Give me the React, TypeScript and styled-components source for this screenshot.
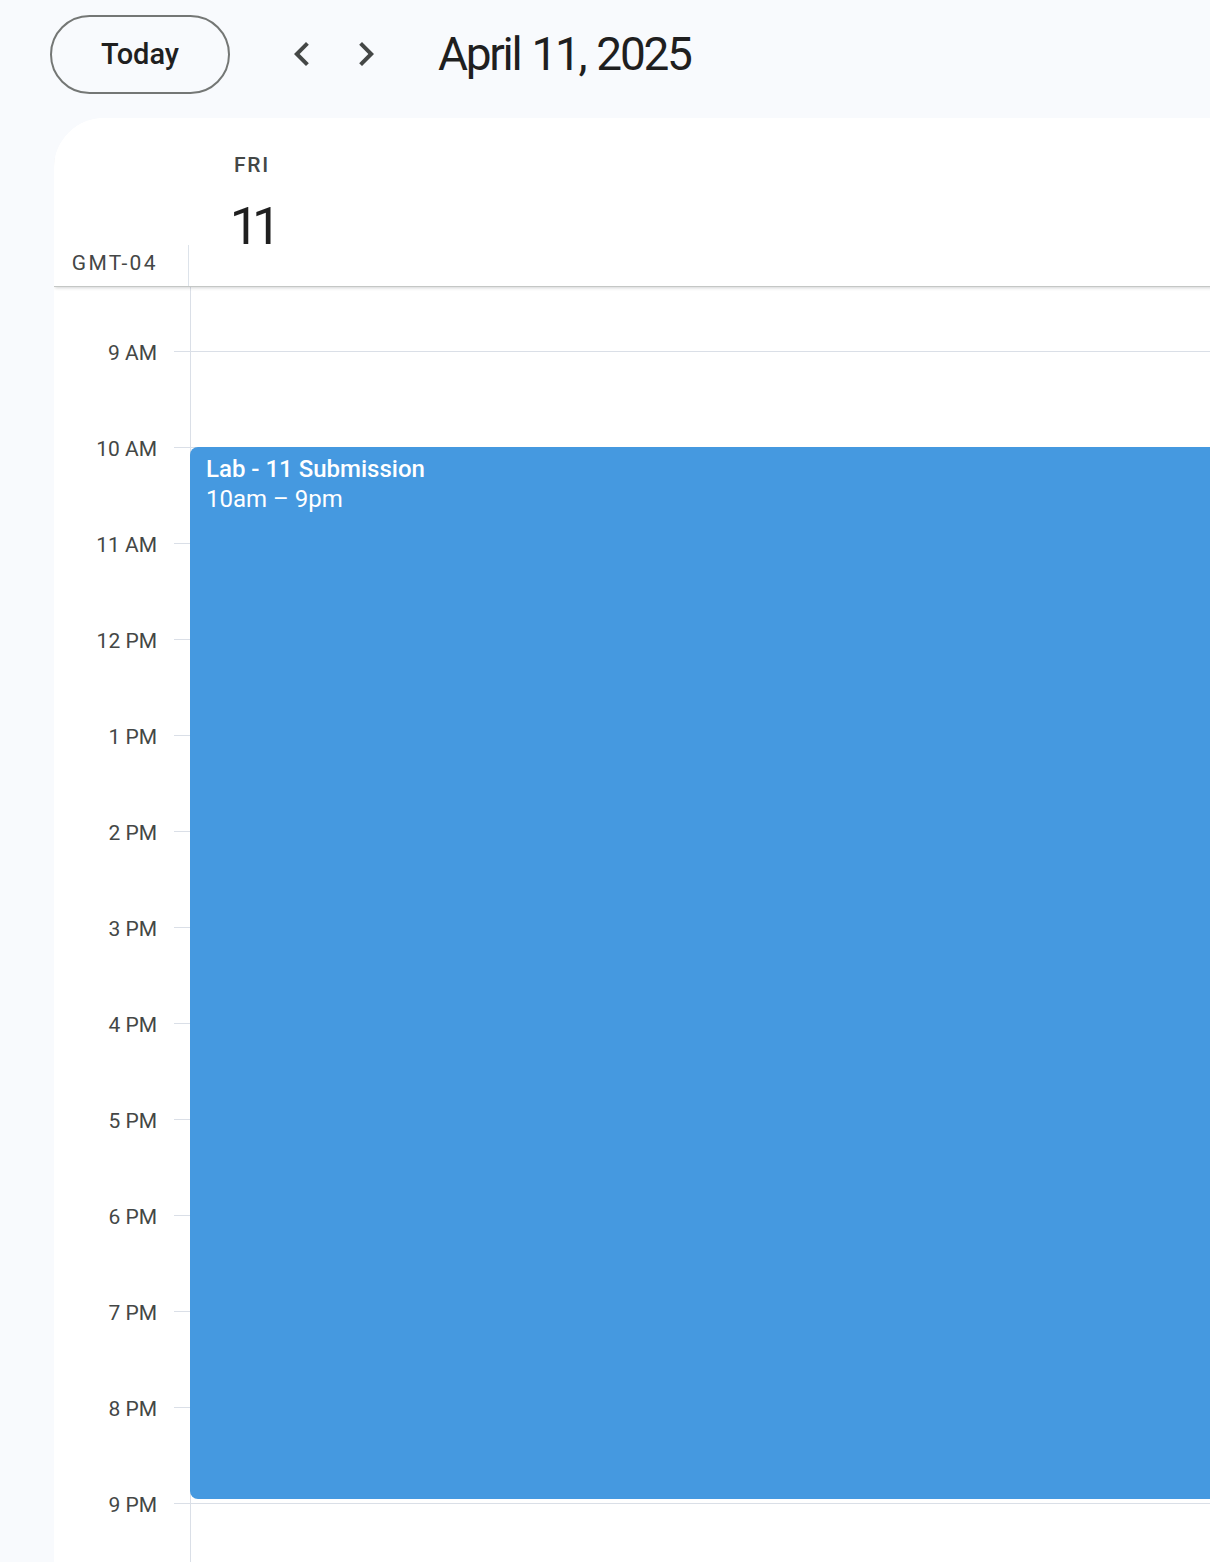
import React from "react";
import styled, { createGlobalStyle } from "styled-components";

const GlobalStyle = createGlobalStyle`
  html, body { margin: 0; padding: 0; overflow: hidden; }
  body {
    background: #f8fafd;
    font-family: Roboto, "Noto Sans", "Liberation Sans", sans-serif;
    color: #1f1f1f;
  }
  * { box-sizing: border-box; }
`;

const Page = styled.div`
  width: 1210px;
  height: 1562px;
  overflow: hidden;
`;

const Toolbar = styled.header`
  display: flex;
  align-items: center;
  height: 108px;
  padding-left: 50px;
`;

const TodayButton = styled.button`
  width: 180px;
  height: 79px;
  border: 2px solid #747775;
  border-radius: 40px;
  background: transparent;
  font-family: inherit;
  font-size: 29px;
  font-weight: 500;
  color: #1f1f1f;
  padding: 0;
  cursor: pointer;
`;

const NavGroup = styled.div`
  display: flex;
  align-items: center;
  gap: 16px;
  margin-left: 48px;
`;

const IconButton = styled.button`
  width: 48px;
  height: 48px;
  border: none;
  background: transparent;
  padding: 0;
  display: flex;
  align-items: center;
  justify-content: center;
  color: #444746;
  cursor: pointer;
`;

const Title = styled.h1`
  margin: 0 0 0 48px;
  font-size: 46px;
  font-weight: 400;
  letter-spacing: -2.3px;
  word-spacing: 2px;
  color: #1f1f1f;
`;

const Panel = styled.main`
  margin: 10px -60px 0 54px;
  background: #ffffff;
  border-top-left-radius: 50px;
  height: 1444px;
  overflow: hidden;
`;

const PanelHeader = styled.div`
  position: relative;
  z-index: 2;
  display: grid;
  grid-template-columns: 135px 1fr;
  height: 169px;
  border-bottom: 1px solid #c4c7c5;
  box-shadow: 0 2px 3px -1px rgba(60, 64, 67, 0.22);
  background: #fff;
`;

const GutterHead = styled.div`
  display: flex;
  align-items: flex-end;
`;

const ZoneLabel = styled.div`
  flex: 1;
  text-align: right;
  padding: 0 30px 11px 0;
  font-size: 21px;
  letter-spacing: 2.4px;
  line-height: 24px;
  color: #444746;
`;

const HeadRule = styled.div`
  width: 0;
  height: 41px;
  border-left: 1px solid #dde3ea;
`;

const DayHead = styled.div`
  display: flex;
  flex-direction: column;
  align-items: center;
  width: 126px;
  padding-top: 33px;
`;

const DayName = styled.div`
  font-size: 21px;
  font-weight: 500;
  letter-spacing: 1.8px;
  line-height: 28px;
  color: #444746;
`;

const DayNumber = styled.div`
  margin-top: 18px;
  font-size: 52px;
  line-height: 60px;
  font-weight: 400;
  letter-spacing: -7px;
  color: #1f1f1f;
`;

const Body = styled.div`
  display: grid;
  grid-template-columns: 136px 1fr;
`;

const Gutter = styled.div`
  display: flex;
  flex-direction: column;
`;

const Spacer = styled.div<{ $h: number }>`
  height: ${(p) => p.$h}px;
  flex: none;
`;

const HourMark = styled.div`
  height: 96px;
  flex: none;
  display: flex;
  align-items: flex-start;
`;

const HourLabel = styled.span`
  width: 103px;
  text-align: right;
  margin-top: -10px;
  font-size: 21px;
  line-height: 24px;
  color: #444746;
`;

const Tick = styled.span`
  margin-left: 17px;
  width: 16px;
  border-top: 1px solid #dadfe7;
`;

const DayColumn = styled.div`
  position: relative;
  border-left: 1px solid #dadfe7;
`;

const HourCell = styled.div`
  height: 96px;
  border-top: 1px solid #dadfe7;
`;

const Event = styled.div<{ $top: number; $height: number }>`
  position: absolute;
  left: -1px;
  right: 24px;
  top: ${(p) => p.$top}px;
  height: ${(p) => p.$height}px;
  background: #4599e0;
  border-radius: 8px;
  padding: 7px 16px;
  color: #ffffff;
  font-size: 24px;
  line-height: 30px;
`;

const EventTitle = styled.div`
  font-weight: 500;
`;

const EventTime = styled.div`
  font-weight: 400;
`;

const ChevronLeft = () => (
  <svg width="48" height="48" viewBox="0 0 24 24" fill="currentColor">
    <path d="M15.41 7.41L14 6l-6 6 6 6 1.41-1.41L10.83 12z" />
  </svg>
);

const ChevronRight = () => (
  <svg width="48" height="48" viewBox="0 0 24 24" fill="currentColor">
    <path d="M8.59 16.59L10 18l6-6-6-6-1.41 1.41L13.17 12z" />
  </svg>
);

const hours = ["9 AM", "10 AM", "11 AM", "12 PM", "1 PM", "2 PM", "3 PM", "4 PM", "5 PM", "6 PM", "7 PM", "8 PM", "9 PM"];
const cells = [...hours, "10 PM"];

const HOUR = 96;
const OFFSET = 64;
const startHourIndex = 1; // 10 AM
const durationHours = 11;

export default function App() {
  return (
    <Page>
      <GlobalStyle />
      <Toolbar>
        <TodayButton>Today</TodayButton>
        <NavGroup>
          <IconButton aria-label="Previous day">
            <ChevronLeft />
          </IconButton>
          <IconButton aria-label="Next day">
            <ChevronRight />
          </IconButton>
        </NavGroup>
        <Title>April 11, 2025</Title>
      </Toolbar>
      <Panel>
        <PanelHeader>
          <GutterHead>
            <ZoneLabel>GMT-04</ZoneLabel>
            <HeadRule />
          </GutterHead>
          <DayHead>
            <DayName>FRI</DayName>
            <DayNumber>11</DayNumber>
          </DayHead>
        </PanelHeader>
        <Body>
          <Gutter>
            <Spacer $h={OFFSET} />
            {hours.map((h) => (
              <HourMark key={h}>
                <HourLabel>{h}</HourLabel>
                <Tick />
              </HourMark>
            ))}
          </Gutter>
          <DayColumn>
            <Spacer $h={OFFSET} />
            {cells.map((h) => (
              <HourCell key={h} />
            ))}
            <Event $top={OFFSET + startHourIndex * HOUR} $height={durationHours * HOUR - 4}>
              <EventTitle>Lab - 11 Submission</EventTitle>
              <EventTime>10am – 9pm</EventTime>
            </Event>
          </DayColumn>
        </Body>
      </Panel>
    </Page>
  );
}
